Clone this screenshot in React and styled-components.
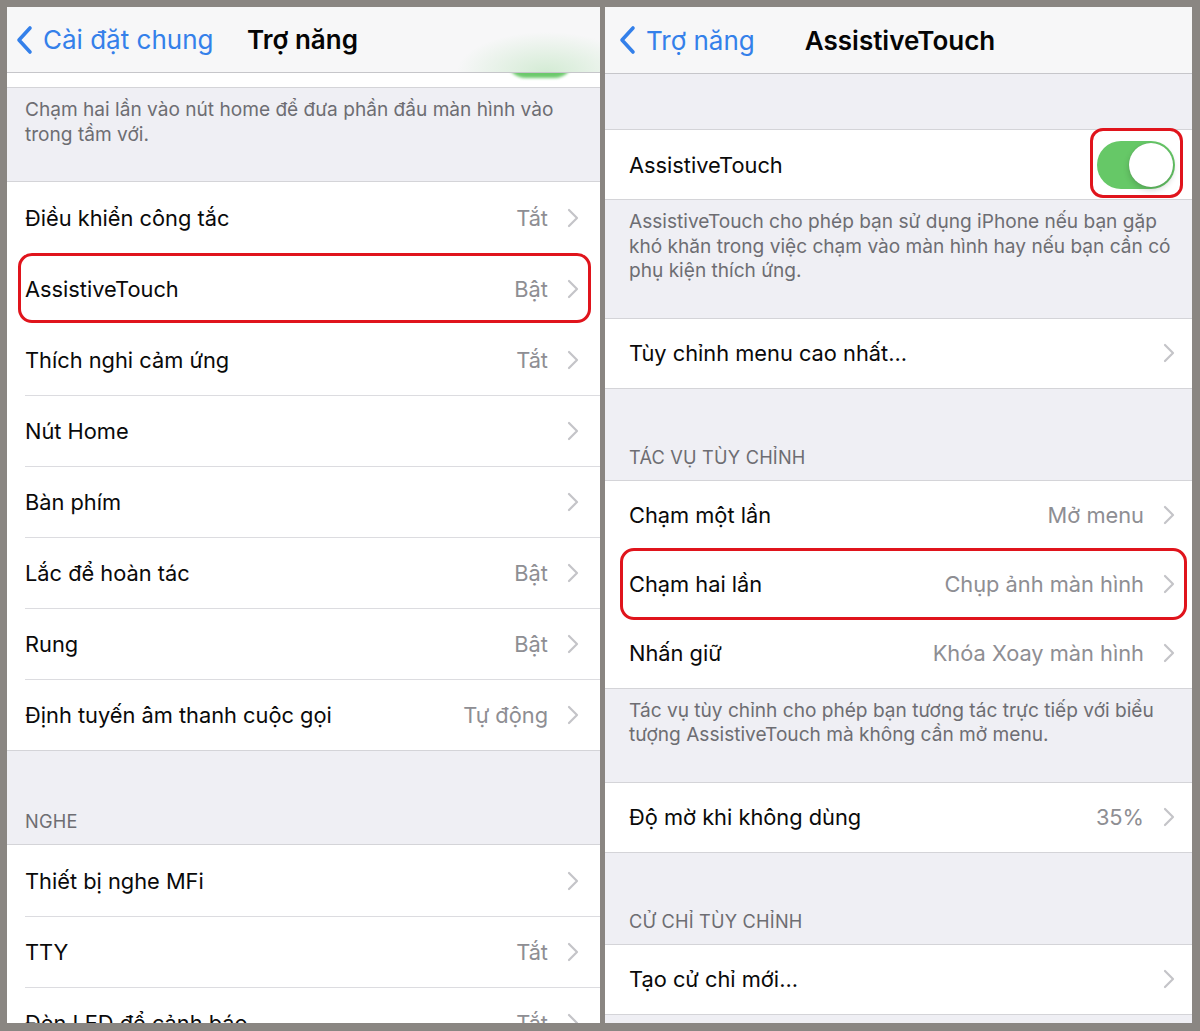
import styled, { createGlobalStyle } from "styled-components";

const GlobalStyle = createGlobalStyle`
  html, body {
    margin: 0;
    padding: 0;
    background: #8a8682;
  }
  body {
    font-family: Inter, "Liberation Sans", sans-serif;
    -webkit-font-smoothing: antialiased;
  }
`;

const Frame = styled.div`
  width: 1200px;
  height: 1031px;
  box-sizing: border-box;
  padding: 7px 8px 8px 7px;
  display: flex;
  gap: 5px;
  background: #8a8682;
`;

const Screen = styled.div`
  --row-h: ${(p) => p.$rowHeight}px;
  --header-h: ${(p) => p.$headerHeight}px;
  --inset: ${(p) => p.$inset}px;
  --pad-r: ${(p) => p.$padRight}px;
  width: ${(p) => p.$width}px;
  flex-shrink: 0;
  display: flex;
  flex-direction: column;
  background: #efeff4;
  overflow: hidden;
`;

const NavBar = styled.div`
  height: ${(p) => p.$height}px;
  flex-shrink: 0;
  box-sizing: border-box;
  display: grid;
  grid-template-columns: 1fr auto 1fr;
  align-items: center;
  padding: 0 10px 0 ${(p) => p.$padLeft}px;
  border-bottom: 1px solid #c6c6ca;
  background: ${(p) =>
		p.$glow
			? "radial-gradient(ellipse 90px 40px at 91% 100%, rgba(120, 205, 120, 0.28), rgba(247, 247, 248, 0) 100%), #f7f7f8"
			: "#f7f7f8"};
`;

const BackButton = styled.div`
  display: flex;
  align-items: center;
  gap: 8px;
  color: #3480ea;
  font-size: 26px;
  white-space: nowrap;
  svg {
    flex-shrink: 0;
  }
`;

const Title = styled.div`
  font-size: 26px;
  font-weight: 600;
  color: #050505;
  white-space: nowrap;
`;

const Spacer = styled.div`
  height: ${(p) => p.$height}px;
  flex-shrink: 0;
`;

const PeekStrip = styled.div`
  height: 14px;
  flex-shrink: 0;
  display: flex;
  justify-content: flex-end;
  align-items: flex-start;
  padding-right: 26px;
  overflow: hidden;
  background: #fff;
  border-bottom: 1px solid #d4d4d8;
`;

const PeekPill = styled.div`
  width: 68px;
  height: 40px;
  margin-top: -35px;
  border-radius: 20px;
  background: #6cc96c;
  filter: blur(1.5px);
`;

const Section = styled.div`
  flex-shrink: 0;
  background: #fff;
  border-top: 1px solid #d4d4d8;
  border-bottom: 1px solid #d4d4d8;
`;

const RowBody = styled.div`
  flex: 1;
  min-width: 0;
  height: 100%;
  box-sizing: border-box;
  display: flex;
  align-items: center;
  padding-right: var(--pad-r);
`;

const Row = styled.div`
  position: relative;
  height: var(--row-h);
  display: flex;
  padding-left: var(--inset);

  & + & ${RowBody} {
    border-top: 1px solid #dcdce0;
  }

  ${(p) =>
		p.$box &&
		`
    &::after {
      content: "";
      position: absolute;
      inset: ${p.$box};
      border: 3px solid #e0141c;
      border-radius: 14px;
      pointer-events: none;
      z-index: 1;
    }
  `}
`;

const Label = styled.div`
  flex: 1;
  font-size: 21.8px;
  color: #0a0a0a;
  white-space: nowrap;
`;

const Value = styled.div`
  font-size: 21.8px;
  color: #8e8e93;
  margin-right: 19px;
  white-space: nowrap;
`;

const Footer = styled.div`
  flex-shrink: 0;
  padding: 9px var(--pad-r) 35px var(--inset);
  font-size: 19.1px;
  line-height: 24.5px;
  color: #6d6d72;
  white-space: nowrap;
`;

const Header = styled.div`
  height: var(--header-h);
  flex-shrink: 0;
  box-sizing: border-box;
  display: flex;
  align-items: flex-end;
  padding: 0 0 10px var(--inset);
  font-size: 18.2px;
  line-height: 25px;
  letter-spacing: 0.2px;
  color: #6d6d72;
`;

const ToggleTrack = styled.div`
  position: relative;
  width: 78px;
  height: 48px;
  box-sizing: border-box;
  padding: 2px;
  border-radius: 24px;
  display: flex;
  justify-content: flex-end;
  background: #66c867;

  ${(p) =>
		p.$highlight &&
		`
    &::after {
      content: "";
      position: absolute;
      inset: -13px -8px -9px -7px;
      border: 3px solid #e0141c;
      border-radius: 13px;
      pointer-events: none;
    }
  `}
`;

const ToggleKnob = styled.div`
  width: 44px;
  height: 44px;
  border-radius: 50%;
  background: #fff;
  box-shadow: 0 3px 6px rgba(0, 0, 0, 0.18), 0 0 1px rgba(0, 0, 0, 0.2);
`;

const BackChevron = () => (
	<svg width="20" height="30" viewBox="0 0 20 30">
		<polyline points="15,3 4,15 15,27" fill="none" stroke="#3480ea"
			strokeWidth="3.6" strokeLinecap="round" strokeLinejoin="round"/>
	</svg>
);

const Chevron = () => (
	<svg width="12" height="20" viewBox="0 0 12 20">
		<polyline points="2,2 10,10 2,18" fill="none" stroke="#c4c4c8"
			strokeWidth="2.2" strokeLinecap="round" strokeLinejoin="round"/>
	</svg>
);

const Toggle = ({ highlight }) => (
	<ToggleTrack $highlight={highlight}>
		<ToggleKnob/>
	</ToggleTrack>
);

const SettingRow = ({ label, value, box, children }) => (
	<Row $box={box}>
		<RowBody>
			<Label>{label}</Label>
			{children || (
				<>
					{value && <Value>{value}</Value>}
					<Chevron/>
				</>
			)}
		</RowBody>
	</Row>
);

const Lines = ({ lines }) => lines.map((line, i) => <div key={i}>{line}</div>);

const accessibilityRows = [
	{ label: "Điều khiển công tắc", value: "Tắt" },
	{ label: "AssistiveTouch", value: "Bật", box: "0 9px 1px 11px" },
	{ label: "Thích nghi cảm ứng", value: "Tắt" },
	{ label: "Nút Home" },
	{ label: "Bàn phím" },
	{ label: "Lắc để hoàn tác", value: "Bật" },
	{ label: "Rung", value: "Bật" },
	{ label: "Định tuyến âm thanh cuộc gọi", value: "Tự động" },
];

const hearingRows = [
	{ label: "Thiết bị nghe MFi" },
	{ label: "TTY", value: "Tắt" },
	{ label: "Đèn LED để cảnh báo", value: "Tắt" },
];

const customActions = [
	{ label: "Chạm một lần", value: "Mở menu" },
	{ label: "Chạm hai lần", value: "Chụp ảnh màn hình", box: "-2px 5px -1px 15px" },
	{ label: "Nhấn giữ", value: "Khóa Xoay màn hình" },
];

const AccessibilityScreen = () => (
	<Screen $width={593} $rowHeight={71} $headerHeight={93} $inset={18} $padRight={21}>
		<NavBar $height={66} $padLeft={8} $glow>
			<BackButton><BackChevron/>Cài đặt chung</BackButton>
			<Title>Trợ năng</Title>
			<div/>
		</NavBar>
		<PeekStrip><PeekPill/></PeekStrip>
		<Footer>
			<Lines lines={[
				"Chạm hai lần vào nút home để đưa phần đầu màn hình vào",
				"trong tầm với.",
			]}/>
		</Footer>
		<Section>
			{accessibilityRows.map((row) => <SettingRow key={row.label} {...row}/>)}
		</Section>
		<Header>NGHE</Header>
		<Section>
			{hearingRows.map((row) => <SettingRow key={row.label} {...row}/>)}
		</Section>
	</Screen>
);

const AssistiveTouchScreen = () => (
	<Screen $width={587} $rowHeight={69} $headerHeight={91} $inset={24} $padRight={17}>
		<NavBar $height={67} $padLeft={13}>
			<BackButton><BackChevron/>Trợ năng</BackButton>
			<Title>AssistiveTouch</Title>
			<div/>
		</NavBar>
		<Spacer $height={55}/>
		<Section>
			<SettingRow label="AssistiveTouch">
				<Toggle highlight/>
			</SettingRow>
		</Section>
		<Footer>
			<Lines lines={[
				"AssistiveTouch cho phép bạn sử dụng iPhone nếu bạn gặp",
				"khó khăn trong việc chạm vào màn hình hay nếu bạn cần có",
				"phụ kiện thích ứng.",
			]}/>
		</Footer>
		<Section>
			<SettingRow label="Tùy chỉnh menu cao nhất..."/>
		</Section>
		<Header>TÁC VỤ TÙY CHỈNH</Header>
		<Section>
			{customActions.map((row) => <SettingRow key={row.label} {...row}/>)}
		</Section>
		<Footer>
			<Lines lines={[
				"Tác vụ tùy chỉnh cho phép bạn tương tác trực tiếp với biểu",
				"tượng AssistiveTouch mà không cần mở menu.",
			]}/>
		</Footer>
		<Section>
			<SettingRow label="Độ mờ khi không dùng" value="35%"/>
		</Section>
		<Header>CỬ CHỈ TÙY CHỈNH</Header>
		<Section>
			<SettingRow label="Tạo cử chỉ mới..."/>
		</Section>
	</Screen>
);

const App = () => (
	<>
		<GlobalStyle/>
		<Frame>
			<AccessibilityScreen/>
			<AssistiveTouchScreen/>
		</Frame>
	</>
);

export default App;
